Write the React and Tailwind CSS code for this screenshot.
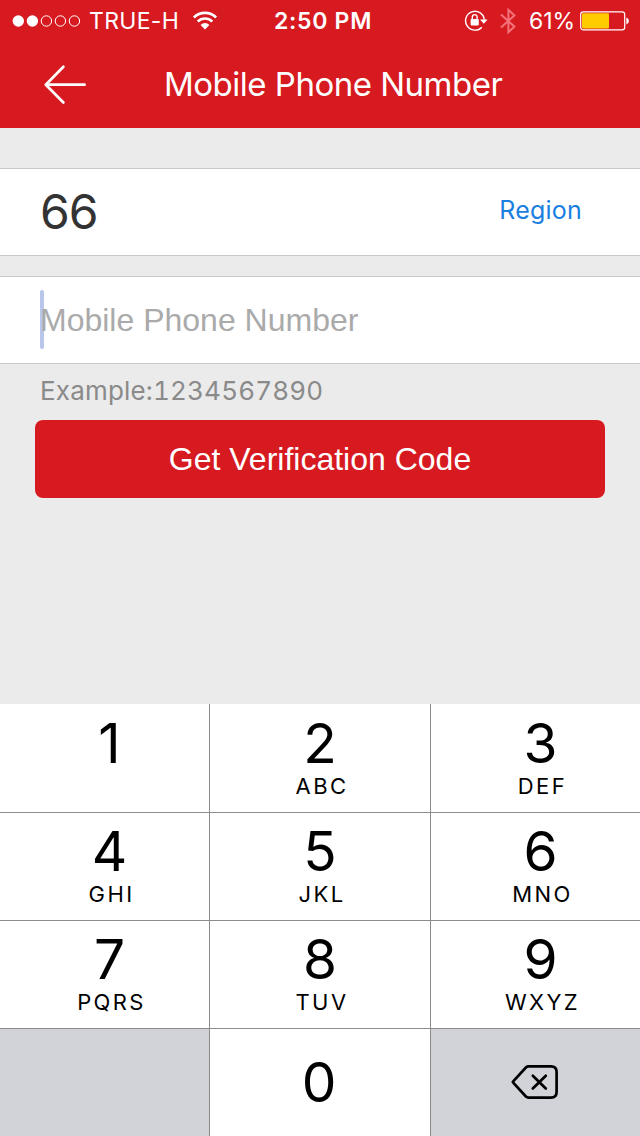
const KEYS = [
  { digit: '1', letters: '' },
  { digit: '2', letters: 'ABC' },
  { digit: '3', letters: 'DEF' },
  { digit: '4', letters: 'GHI' },
  { digit: '5', letters: 'JKL' },
  { digit: '6', letters: 'MNO' },
  { digit: '7', letters: 'PQRS' },
  { digit: '8', letters: 'TUV' },
  { digit: '9', letters: 'WXYZ' },
];

const COLUMN_PADDING = ['pl-[10px]', '', 'pl-[10px]'];

function SignalDots() {
  return (
    <svg width="68" height="14" viewBox="0 0 68 14" fill="none" stroke="#fff">
      <circle cx="6.3" cy="7" r="5.7" fill="#fff" stroke="none" />
      <circle cx="20.4" cy="7" r="5.7" fill="#fff" stroke="none" />
      <circle cx="34.4" cy="7" r="5.2" />
      <circle cx="48.4" cy="7" r="5.2" />
      <circle cx="62.4" cy="7" r="5.2" />
    </svg>
  );
}

function WifiIcon() {
  return (
    <svg width="26" height="20" viewBox="0 0 26 20" fill="none" stroke="#fff">
      <path d="M1.9 6.4a15.8 15.8 0 0 1 22.2 0" strokeWidth="2.8" />
      <path d="M5.7 10.5a10.4 10.4 0 0 1 14.6 0" strokeWidth="2.6" />
      <path d="M8.6 13.9a6.3 6.3 0 0 1 8.8 0L13 18.4Z" fill="#fff" stroke="none" />
    </svg>
  );
}

function RotationLockIcon() {
  return (
    <svg width="24" height="22" viewBox="0 0 24 22" fill="none" stroke="#fff">
      <path d="M17.8 17.2A9.4 9.4 0 1 1 20.3 9.6" strokeWidth="1.4" />
      <path d="M16 9.4h7.6l-3.8 4.4Z" fill="#fff" stroke="none" />
      <rect x="6.6" y="9" width="8.2" height="6.4" rx="0.8" fill="#fff" stroke="none" />
      <path d="M8.3 9.4V7a2.4 2.4 0 0 1 4.8 0v2.4" strokeWidth="1.4" />
    </svg>
  );
}

function BluetoothIcon() {
  return (
    <svg width="16" height="28" viewBox="0 0 16 28" fill="none" stroke="#f4727a" strokeWidth="2">
      <path d="M1 7.5 14.4 19.6 8.4 25.2V2.8l6 5.6L1 20.5" />
    </svg>
  );
}

function BatteryIcon() {
  return (
    <svg width="50" height="20" viewBox="0 0 50 20" fill="none">
      <rect x="0.7" y="0.9" width="44" height="18" rx="2.6" stroke="#fff" strokeWidth="1.2" />
      <rect x="2" y="2.2" width="27" height="15.4" rx="1" fill="#fc0" />
      <path d="M46.3 6.6q2.6.8 2.6 3.4t-2.6 3.4Z" fill="#fff" />
    </svg>
  );
}

function BackArrow() {
  return (
    <svg
      width="44"
      height="42"
      viewBox="0 0 44 42"
      fill="none"
      stroke="#fff"
      strokeWidth="2.7"
      strokeLinecap="round"
      strokeLinejoin="round"
    >
      <path d="M20.4 2.8 2.8 20.7l17.6 17.8M2.8 20.7h38.8" />
    </svg>
  );
}

function DeleteIcon() {
  return (
    <svg
      width="48"
      height="36"
      viewBox="0 0 48 36"
      fill="none"
      stroke="#000"
      strokeWidth="2.7"
      strokeLinecap="round"
      strokeLinejoin="round"
    >
      <path d="M17.5 2.4H40q5.6 0 5.6 5.6v20q0 5.6-5.6 5.6H17.5q-1.4 0-2.6-1.1L2.2 18.6q-.6-.6 0-1.2L14.9 3.5q1.2-1.1 2.6-1.1Z" />
      <path d="m21.8 11.7 13 12.8m0-12.8-13 12.8" />
    </svg>
  );
}

function StatusBar() {
  return (
    <div className="flex h-[41px] items-center whitespace-nowrap pl-3 pt-px text-[23px] leading-[40px] text-white">
      <SignalDots />
      <span className="ml-[9px] w-[103px] tracking-[0.3px]">TRUE-H</span>
      <WifiIcon />
      <span className="ml-[56px] w-[190px] font-semibold tracking-[0.7px]">2:50 PM</span>
      <RotationLockIcon />
      <span className="ml-[12px]">
        <BluetoothIcon />
      </span>
      <span className="ml-[13px] w-[51px] tracking-[-0.1px]">61%</span>
      <BatteryIcon />
    </div>
  );
}

function Key({ digit, letters, column, firstRow }) {
  return (
    <div
      className={`flex flex-col items-center bg-white ${firstRow ? 'pt-[9px]' : 'pt-[8px]'} ${COLUMN_PADDING[column]}`}
    >
      <span className="text-[55px] leading-[60px]">{digit}</span>
      <span className="mt-px pl-[4px] text-[22px] leading-[24px] tracking-[2.4px]">{letters}</span>
    </div>
  );
}

function Keypad() {
  return (
    <div className="grid h-[432px] grid-cols-[209px_220px_209px] grid-rows-[108px_107px_107px_107px] gap-px bg-[#8c8c8c] text-black">
      {KEYS.map((key, i) => (
        <Key key={key.digit} {...key} column={i % 3} firstRow={i < 3} />
      ))}
      <div className="bg-[#d2d3d8]" />
      <div className="flex items-center justify-center bg-white pb-[2px] pr-[2px] text-[55px] leading-[60px]">0</div>
      <div className="flex items-center justify-center bg-[#d2d3d8] pb-[2px] pr-[2px]">
        <DeleteIcon />
      </div>
    </div>
  );
}

export default function App() {
  return (
    <div className="flex h-[1136px] w-[640px] flex-col overflow-hidden bg-[#ebebeb] font-['Inter',sans-serif]">
      <header className="h-32 bg-[#d71920]">
        <StatusBar />
        <div className="flex h-[87px] items-center whitespace-nowrap pl-[43px] text-white">
          <BackArrow />
          <h1 className="ml-[77px] text-[33px] leading-[87px] tracking-[-0.5px]">Mobile Phone Number</h1>
        </div>
      </header>

      <main className="flex flex-1 flex-col">
        <div className="mt-10 flex h-[88px] items-center justify-between border-y border-[#c8c8c8] bg-white pr-[58px] pl-[40px]">
          <span className="text-[48px] leading-[86px] tracking-[-1px] text-[#333]">66</span>
          <a className="pb-[3px] text-[25px] leading-[83px] tracking-[0.2px] text-[#1a7fe0]">Region</a>
        </div>

        <div className="mt-5 flex h-[88px] items-center border-y border-[#c8c8c8] bg-white pl-10">
          <span className="-mr-1 mb-[2px] h-[59px] w-1 rounded-sm bg-[#b9c6ec]" />
          <span className="font-['Liberation_Sans',sans-serif] text-[32px] leading-[86px] text-[#aaa]">
            Mobile Phone Number
          </span>
        </div>

        <p className="h-14 pl-10 text-[26px] leading-[53px] tracking-[0.18px] text-[#8a8a8a] tabular-nums">
          Example:1234567890
        </p>

        <button className="mx-[35px] h-[78px] rounded-lg bg-[#d71920] font-['Liberation_Sans',sans-serif] text-[32px] text-white">
          Get Verification Code
        </button>
      </main>

      <Keypad />
    </div>
  );
}
